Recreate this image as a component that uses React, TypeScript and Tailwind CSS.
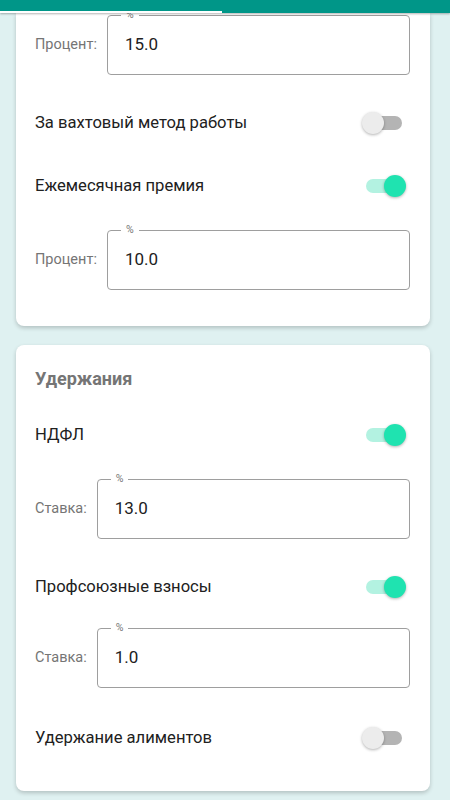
import React from "react";

const font = { fontFamily: "Roboto, 'Noto Sans', Arial, sans-serif" };

function Switch({ on }: { on: boolean }) {
  return (
    <div className="relative w-[44px] h-[22px] mr-1 shrink-0">
      <div
        className={
          "absolute top-[4px] left-[4px] w-[36px] h-[14px] rounded-full " +
          (on ? "bg-[#b3f2e1]" : "bg-[#b4b4b4]")
        }
      />
      {on ? (
        <div className="absolute top-0 left-[22px] w-[22px] h-[22px] rounded-full bg-[#1fe3b0] shadow-[0_1px_3px_rgba(0,0,0,0.3)]" />
      ) : (
        <div className="absolute top-0 left-0 w-[22px] h-[22px] rounded-full bg-[#ececec] shadow-[0_1px_3px_rgba(0,0,0,0.3)]" />
      )}
    </div>
  );
}

function ToggleRow({ label, on, className = "" }: { label: string; on: boolean; className?: string }) {
  return (
    <div className={"flex items-center justify-between h-[48px] " + className}>
      <span className="text-[16.6px] text-[#212121]">{label}</span>
      <Switch on={on} />
    </div>
  );
}

function FieldRow({ label, value, className = "" }: { label: string; value: string; className?: string }) {
  return (
    <div className={"flex items-center " + className}>
      <span className="text-[14.5px] text-[#757575] mr-[10px] shrink-0">{label}</span>
      <div className="relative flex-1 h-[60px] border border-[#9e9e9e] rounded-[4px] flex items-center pl-[17px]">
        <span className="absolute top-[-7px] left-[13px] px-[5px] bg-white text-[10.5px] leading-[12px] text-[#757575]">
          %
        </span>
        <span className="text-[17px] text-[#212121]">{value}</span>
      </div>
    </div>
  );
}

export default function App() {
  return (
    <div className="w-[450px] h-[800px] overflow-hidden bg-[#dff1f1] flex flex-col" style={font}>
      <div className="relative z-10 flex flex-col bg-[#009688] shadow-[0_1px_2px_rgba(0,0,0,0.3)]">
        <div className="h-[11px]" />
        <div className="flex h-[2px]">
          <div className="w-[222px] bg-white" />
        </div>
      </div>

      <div className="ml-4 w-[414px] bg-white rounded-b-[8px] shadow-[0_2px_4px_rgba(0,0,0,0.2)] pl-[19px] pr-5 pt-[2px] pb-[36px]">
        <FieldRow label="Процент:" value="15.0" />
        <ToggleRow label="За вахтовый метод работы" on={false} className="mt-6" />
        <ToggleRow label="Ежемесячная премия" on={true} className="mt-[15px]" />
        <FieldRow label="Процент:" value="10.0" className="mt-5" />
      </div>

      <div className="ml-4 mt-[19px] w-[414px] bg-white rounded-[8px] shadow-[0_2px_4px_rgba(0,0,0,0.2)] pl-[19px] pr-5 pt-[22px] pb-[29px]">
        <div className="text-[18px] leading-[24px] font-bold text-[#757575]">Удержания</div>
        <ToggleRow label="НДФЛ" on={true} className="mt-5" />
        <FieldRow label="Ставка:" value="13.0" className="mt-5" />
        <ToggleRow label="Профсоюзные взносы" on={true} className="mt-6" />
        <FieldRow label="Ставка:" value="1.0" className="mt-[17px]" />
        <ToggleRow label="Удержание алиментов" on={false} className="mt-[26px]" />
      </div>
    </div>
  );
}
